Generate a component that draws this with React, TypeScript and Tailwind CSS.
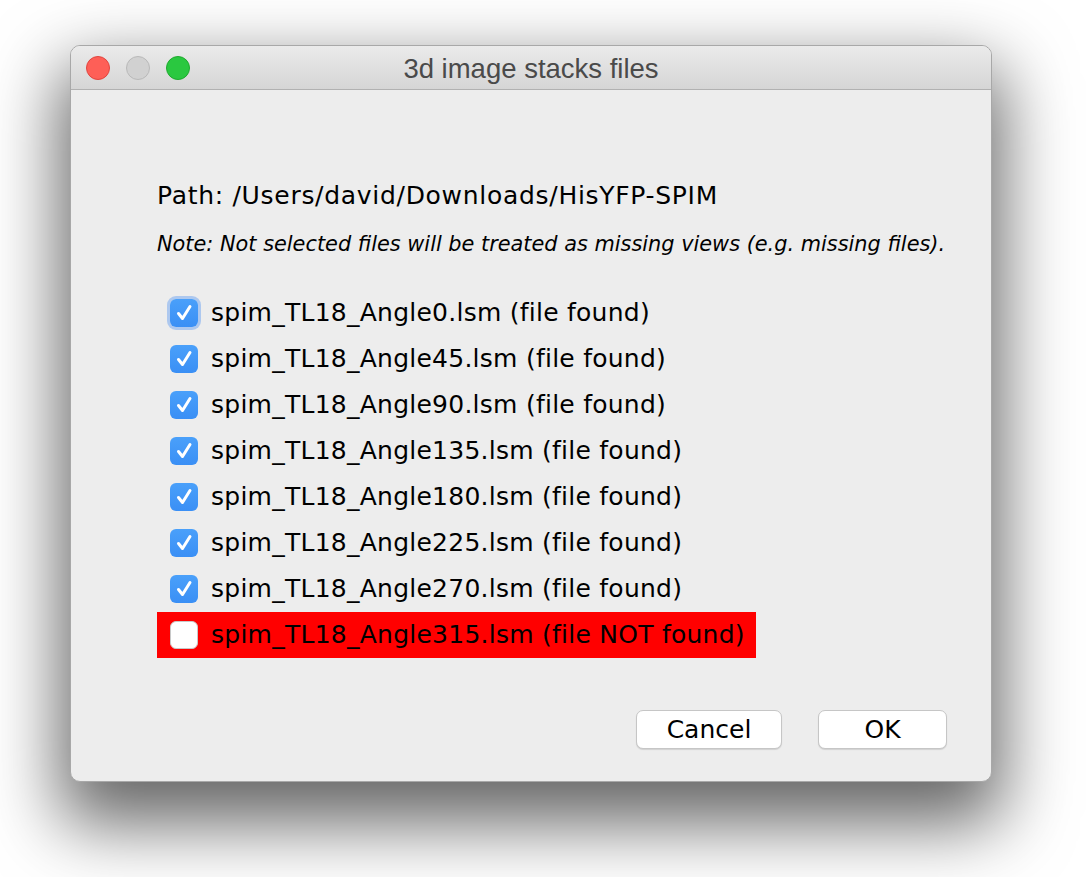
import React from 'react';

const files = [
  { name: 'spim_TL18_Angle0.lsm', found: true },
  { name: 'spim_TL18_Angle45.lsm', found: true },
  { name: 'spim_TL18_Angle90.lsm', found: true },
  { name: 'spim_TL18_Angle135.lsm', found: true },
  { name: 'spim_TL18_Angle180.lsm', found: true },
  { name: 'spim_TL18_Angle225.lsm', found: true },
  { name: 'spim_TL18_Angle270.lsm', found: true },
  { name: 'spim_TL18_Angle315.lsm', found: false },
];

const CheckBox: React.FC<{ checked: boolean; focused?: boolean }> = ({ checked, focused }) => {
  if (!checked) {
    return <div className="w-[28px] h-[28px] rounded-[6px] bg-white border border-[#c8c8c8] shrink-0" />;
  }
  return (
    <div
      className={`w-[28px] h-[28px] rounded-[6px] bg-gradient-to-b from-[#4aa0fa] to-[#3a8ff5] flex items-center justify-center shrink-0 ${
        focused ? 'shadow-[0_0_0_3px_rgba(120,170,240,0.55)]' : ''
      }`}
    >
      <svg width="28" height="28" viewBox="0 0 28 28">
        <path d="M8.5 14.5 L12.5 19.5 L20 7.5" fill="none" stroke="white" strokeWidth="3" strokeLinecap="round" strokeLinejoin="round" />
      </svg>
    </div>
  );
};

const TrafficLight: React.FC<{ color: string }> = ({ color }) => (
  <div className={`w-[24px] h-[24px] rounded-full ${color}`} />
);

export default function App() {
  return (
    <div className="min-h-[877px] bg-white pl-[70px] pt-[45px] font-['DejaVu_Sans',sans-serif]">
      <div className="w-[922px] h-[737px] rounded-[10px] bg-[#ededed] border border-[#a8a8a8] shadow-[0_32px_70px_10px_rgba(0,0,0,0.6)] flex flex-col overflow-hidden">
        <div className="h-[44px] shrink-0 relative flex items-center bg-gradient-to-b from-[#ebebeb] to-[#d5d5d5] border-b border-[#b1b1b1]">
          <div className="flex items-center gap-[16px] pl-[15px]">
            <TrafficLight color="bg-[#fe5f57] border border-[#e1453f]" />
            <TrafficLight color="bg-[#d1d1d1] border border-[#b9b9b9]" />
            <TrafficLight color="bg-[#2ac840] border border-[#1eaa2e]" />
          </div>
          <div className="absolute inset-0 flex items-center justify-center text-[27.5px] text-[#4a4a4a] font-['Liberation_Sans',sans-serif] pt-[2px]">
            3d image stacks files
          </div>
        </div>

        <div className="flex-1 flex flex-col pl-[86px] pr-[44px] pt-[91px] pb-[32px]">
          <div className="text-[25px] leading-[30px] tracking-[0.7px] text-black">Path: /Users/david/Downloads/HisYFP-SPIM</div>
          <div className="mt-[21px] text-[20.85px] leading-[24px] italic text-black whitespace-nowrap">
            Note: Not selected files will be treated as missing views (e.g. missing files).
          </div>

          <div className="mt-[34px] flex flex-col">
            {files.map((f, i) => (
              <div
                key={f.name}
                className={`h-[46px] flex items-center gap-[13px] pl-[13px] w-fit pr-[11px] ${f.found ? '' : 'bg-[#ff0000]'}`}
              >
                <CheckBox checked={f.found} focused={i === 0} />
                <span className="text-[25px] tracking-[0.25px] text-black whitespace-nowrap">
                  {f.name} ({f.found ? 'file found' : 'file NOT found'})
                </span>
              </div>
            ))}
          </div>

          <div className="mt-auto flex justify-end gap-[36px]">
            <button className="w-[146px] h-[39px] rounded-[7px] bg-white border border-[#c6c6c6] shadow-[0_1px_1px_rgba(0,0,0,0.12)] text-[25px] text-black">
              Cancel
            </button>
            <button className="w-[129px] h-[39px] rounded-[7px] bg-white border border-[#c6c6c6] shadow-[0_1px_1px_rgba(0,0,0,0.12)] text-[25px] text-black">
              OK
            </button>
          </div>
        </div>
      </div>
    </div>
  );
}
